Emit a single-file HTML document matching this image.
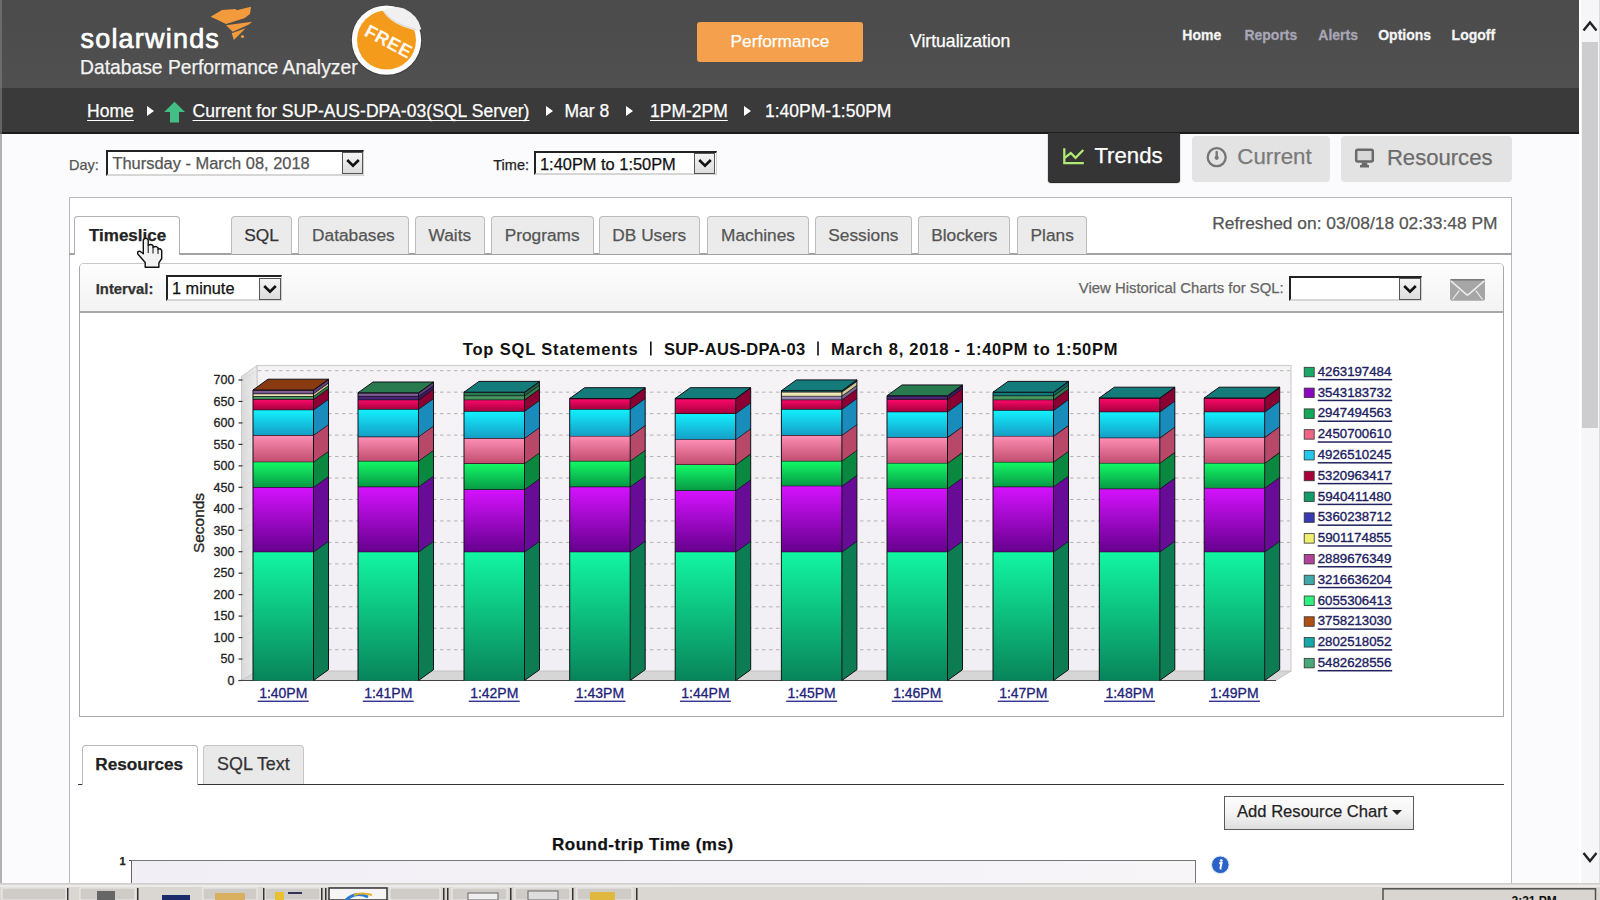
<!DOCTYPE html>
<html><head><meta charset="utf-8"><style>
html,body{margin:0;padding:0;width:1600px;height:900px;overflow:hidden;background:#fbfbfd;font-family:"Liberation Sans",sans-serif;}
.t{position:absolute;white-space:nowrap;line-height:normal;-webkit-text-stroke:0.25px currentColor;}
</style></head><body>
<div style="position:absolute;left:0;top:0;width:1580px;height:88px;background:linear-gradient(#4b4b4b,#505050)"></div><div style="position:absolute;left:0;top:88px;width:1580px;height:45.5px;background:#3a3a3a;border-bottom:2px solid #1c1c1c;box-sizing:border-box"></div><div class="t" style="left:80.5px;top:23.56px;font-size:27px;font-weight:400;color:#fff;letter-spacing:1.2px;-webkit-text-stroke:0.7px #fff">solarwinds</div>
<div class="t" style="left:80px;top:56.53px;font-size:19.3px;font-weight:400;color:#f2f2f2;">Database Performance Analyzer</div>
<svg style="position:absolute;left:0;top:0" width="440" height="88">
<path d="M210.6 16.7 L222 10 L235.6 8.9 L236.7 10.3 L251 6.7 L250 13.9 L244.4 18.3 L226 23.9 L216.7 19.4 Z" fill="#f39a3c"/>
<path d="M226 25.2 L252.2 21.7 L248.9 24.6 L232.8 31.7 Z" fill="#f39a3c"/>
<path d="M231.7 33.3 L245.6 28.3 L233.9 40 Z" fill="#f39a3c"/>
<circle cx="242.5" cy="36.5" r="1.6" fill="#f39a3c"/>
<circle cx="386.5" cy="40.5" r="35.5" fill="#2a2a2a" opacity="0.5"/>
<circle cx="386.5" cy="40.1" r="34.7" fill="#fdfdfd"/>
<circle cx="386.5" cy="40.1" r="29.5" fill="#f59b1c"/>
<path d="M382.5 10.5 Q391 25 417.5 31 L421.2 29 Q418 15 404 8.5 Q393 4.5 382.5 10.5 Z" fill="#f0f0f0"/><path d="M384 11.5 Q392 23.5 416 29.5" fill="none" stroke="#d8d8d8" stroke-width="1"/>
<text x="0" y="0" transform="translate(385.5 47) rotate(28)" text-anchor="middle" font-family="Liberation Sans" font-weight="700" font-size="18.5" fill="#fff8ee" letter-spacing="0.3">FREE</text>
</svg><div style="position:absolute;left:697px;top:21.5px;width:166px;height:40px;background:#f5a04c;border-radius:3px"></div><div class="t" style="left:730.5px;top:31.34px;font-size:17.3px;font-weight:400;color:#fff;">Performance</div>
<div class="t" style="left:910px;top:31.07px;font-size:17.6px;font-weight:400;color:#fff;">Virtualization</div>
<div class="t" style="left:1182.3px;top:26.53px;font-size:14px;font-weight:700;color:#f4f4f4;transform:scaleY(1.04);transform-origin:0 100%">Home</div>
<div class="t" style="left:1244.4px;top:26.53px;font-size:14px;font-weight:700;color:#a9a6b6;transform:scaleY(1.04);transform-origin:0 100%">Reports</div>
<div class="t" style="left:1318.3px;top:26.53px;font-size:14px;font-weight:700;color:#a9a6b6;transform:scaleY(1.04);transform-origin:0 100%">Alerts</div>
<div class="t" style="left:1378.2px;top:26.53px;font-size:14px;font-weight:700;color:#f4f4f4;transform:scaleY(1.04);transform-origin:0 100%">Options</div>
<div class="t" style="left:1451.6px;top:26.53px;font-size:14px;font-weight:700;color:#f4f4f4;transform:scaleY(1.04);transform-origin:0 100%">Logoff</div>
<div class="t" style="left:87.1px;top:101.46px;font-size:17.5px;font-weight:400;color:#fff;text-decoration:underline;text-underline-offset:3px">Home</div>
<div style="position:absolute;left:146.5px;top:106px;width:0;height:0;border-left:7px solid #fff;border-top:5.5px solid transparent;border-bottom:5.5px solid transparent"></div><svg style="position:absolute;left:164px;top:101px" width="22" height="22"><path d="M10.5 0.7 L21 11 L15 11 L15 21.5 L6 21.5 L6 11 L0.2 11 Z" fill="#43bf86"/></svg><div class="t" style="left:192.5px;top:101.46px;font-size:17.5px;font-weight:400;color:#fff;text-decoration:underline;text-underline-offset:3px;letter-spacing:0.065px">Current for SUP-AUS-DPA-03(SQL Server)</div>
<div style="position:absolute;left:546px;top:106px;width:0;height:0;border-left:7px solid #fff;border-top:5.5px solid transparent;border-bottom:5.5px solid transparent"></div><div class="t" style="left:564.5px;top:101.46px;font-size:17.5px;font-weight:400;color:#fff;">Mar 8</div>
<div style="position:absolute;left:626px;top:106px;width:0;height:0;border-left:7px solid #fff;border-top:5.5px solid transparent;border-bottom:5.5px solid transparent"></div><div class="t" style="left:650px;top:101.46px;font-size:17.5px;font-weight:400;color:#fff;text-decoration:underline;text-underline-offset:3px">1PM-2PM</div>
<div style="position:absolute;left:744px;top:106px;width:0;height:0;border-left:7px solid #fff;border-top:5.5px solid transparent;border-bottom:5.5px solid transparent"></div><div class="t" style="left:765px;top:101.46px;font-size:17.5px;font-weight:400;color:#fff;">1:40PM-1:50PM</div>
<div style="position:absolute;left:1579px;top:0;width:21px;height:883px;background:#f6f6f8;border-left:2px solid #fff;box-sizing:border-box"></div><div style="position:absolute;left:1582px;top:42px;width:16px;height:386px;background:#cdcdcf"></div><div style="position:absolute;left:1599px;top:0;width:1px;height:883px;background:#dcdcdc"></div><svg style="position:absolute;left:1580px;top:0" width="20" height="883">
<path d="M3.5 30.5 L10 22.5 L16.5 30.5" fill="none" stroke="#222" stroke-width="2.4"/>
<path d="M3.5 853 L10 861 L16.5 853" fill="none" stroke="#222" stroke-width="2.4"/>
</svg><div class="t" style="left:69px;top:156.88px;font-size:14.5px;font-weight:400;color:#555;">Day:</div>
<div style="position:absolute;left:106.4px;top:150px;width:258.0px;height:25.5px;background:#fff;border-top:2px solid #222;border-left:2px solid #222;border-right:1px solid #cfcfcf;border-bottom:2px solid #d6d6d6;box-sizing:border-box"></div><div style="position:absolute;left:342px;top:152px;width:21px;height:22px;background:linear-gradient(#f4f4f4,#dcdcdc);border:1px solid #555;box-sizing:border-box"></div><svg style="position:absolute;left:344.5px;top:157.0px" width="16" height="12"><path d="M2.2 3 L8 8.6 L13.8 3" fill="none" stroke="#111" stroke-width="2.6"/></svg><div class="t" style="left:112.4px;top:154.11px;font-size:16.45px;font-weight:400;color:#555;">Thursday - March 08, 2018</div>
<div class="t" style="left:493.3px;top:156.58px;font-size:14.5px;font-weight:400;color:#222;">Time:</div>
<div style="position:absolute;left:534px;top:150.6px;width:182.5px;height:24.400000000000006px;background:#fff;border-top:2px solid #222;border-left:2px solid #222;border-right:1px solid #cfcfcf;border-bottom:2px solid #d6d6d6;box-sizing:border-box"></div><div style="position:absolute;left:694px;top:152.5px;width:21px;height:21.0px;background:linear-gradient(#f4f4f4,#dcdcdc);border:1px solid #555;box-sizing:border-box"></div><svg style="position:absolute;left:696.5px;top:157.0px" width="16" height="12"><path d="M2.2 3 L8 8.6 L13.8 3" fill="none" stroke="#111" stroke-width="2.6"/></svg><div class="t" style="left:540px;top:154.66px;font-size:16.4px;font-weight:400;color:#111;">1:40PM to 1:50PM</div>
<div style="position:absolute;left:1048.4px;top:133px;width:132px;height:48.5px;background:#353535;border-radius:0 0 3px 3px;box-shadow:0 1px 1px #111"></div><svg style="position:absolute;left:1060px;top:146px" width="28" height="20">
<path d="M4.3 2.3 L4.3 17.1 L23.8 17.1" fill="none" stroke="#b0ea74" stroke-width="2.3"/>
<path d="M4.6 11.8 L10.8 7 L15.5 11.8 L23.3 4" fill="none" stroke="#b0ea74" stroke-width="2.3"/>
</svg><div class="t" style="left:1094.4px;top:143.21px;font-size:22.2px;font-weight:400;color:#fff;">Trends</div>
<div style="position:absolute;left:1191.6px;top:136.4px;width:138px;height:45.6px;background:#e3e3e3;border-radius:4px"></div><svg style="position:absolute;left:1205px;top:146px" width="24" height="24">
<circle cx="11.7" cy="11.2" r="9" fill="none" stroke="#747474" stroke-width="2.3"/>
<path d="M11.7 6 L11.7 11.5" stroke="#777" stroke-width="2.4" stroke-linecap="round"/>
<circle cx="11.7" cy="11.8" r="2.1" fill="#777"/>
</svg><div class="t" style="left:1237.3px;top:144.42px;font-size:22.3px;font-weight:400;color:#7a7a7a;">Current</div>
<div style="position:absolute;left:1341px;top:136px;width:170.5px;height:46.4px;background:#e3e3e3;border-radius:4px"></div><svg style="position:absolute;left:1354px;top:147px" width="22" height="22">
<rect x="2.2" y="2.8" width="16.6" height="11.8" rx="1.5" fill="#d8d8d8" stroke="#6a6a6a" stroke-width="2.5"/>
<path d="M8 15.5 L13 15.5 L13.5 18 L15 18 L15 20.4 L6 20.4 L6 18 L7.5 18 Z" fill="#6a6a6a"/>
</svg><div class="t" style="left:1386.9px;top:144.90px;font-size:22.1px;font-weight:400;color:#6c6c6c;">Resources</div>
<div style="position:absolute;left:69.4px;top:196.8px;width:1443px;height:720px;background:#fff;border:1px solid #b9b9b9;box-sizing:border-box"></div><div style="position:absolute;left:69.4px;top:253.4px;width:1443px;height:1.6px;background:#a2a2a2"></div><div style="position:absolute;left:74.3px;top:216px;width:105.7px;height:39.19999999999999px;background:#fff;border:1px solid #b0b0b0;border-bottom:none;border-radius:4px 4px 0 0;box-sizing:border-box"></div><div class="t" style="left:89px;top:225.81px;font-size:17px;font-weight:700;color:#222;">Timeslice</div>
<div style="position:absolute;left:231.4px;top:216px;width:60.20000000000002px;height:37.599999999999994px;background:#ebebeb;border:1px solid #bcbcbc;border-bottom:none;border-radius:4px 4px 0 0;box-sizing:border-box"></div><div class="t" style="left:244.18px;top:225.24px;font-size:17.3px;font-weight:400;color:#333;">SQL</div>
<div style="position:absolute;left:298.2px;top:216px;width:110.5px;height:37.599999999999994px;background:#ebebeb;border:1px solid #bcbcbc;border-bottom:none;border-radius:4px 4px 0 0;box-sizing:border-box"></div><div class="t" style="left:312.08px;top:225.24px;font-size:17.3px;font-weight:400;color:#555;">Databases</div>
<div style="position:absolute;left:414.9px;top:216px;width:69.90000000000003px;height:37.599999999999994px;background:#ebebeb;border:1px solid #bcbcbc;border-bottom:none;border-radius:4px 4px 0 0;box-sizing:border-box"></div><div class="t" style="left:428.54px;top:225.24px;font-size:17.3px;font-weight:400;color:#555;">Waits</div>
<div style="position:absolute;left:490.5px;top:216px;width:103.29999999999995px;height:37.599999999999994px;background:#ebebeb;border:1px solid #bcbcbc;border-bottom:none;border-radius:4px 4px 0 0;box-sizing:border-box"></div><div class="t" style="left:504.64px;top:225.24px;font-size:17.3px;font-weight:400;color:#555;">Programs</div>
<div style="position:absolute;left:599px;top:216px;width:100.70000000000005px;height:37.599999999999994px;background:#ebebeb;border:1px solid #bcbcbc;border-bottom:none;border-radius:4px 4px 0 0;box-sizing:border-box"></div><div class="t" style="left:612.33px;top:225.24px;font-size:17.3px;font-weight:400;color:#555;">DB Users</div>
<div style="position:absolute;left:707.4px;top:216px;width:101.30000000000007px;height:37.599999999999994px;background:#ebebeb;border:1px solid #bcbcbc;border-bottom:none;border-radius:4px 4px 0 0;box-sizing:border-box"></div><div class="t" style="left:721.01px;top:225.24px;font-size:17.3px;font-weight:400;color:#555;">Machines</div>
<div style="position:absolute;left:814.9px;top:216px;width:97.10000000000002px;height:37.599999999999994px;background:#ebebeb;border:1px solid #bcbcbc;border-bottom:none;border-radius:4px 4px 0 0;box-sizing:border-box"></div><div class="t" style="left:828.34px;top:225.24px;font-size:17.3px;font-weight:400;color:#555;">Sessions</div>
<div style="position:absolute;left:918.2px;top:216px;width:92.29999999999995px;height:37.599999999999994px;background:#ebebeb;border:1px solid #bcbcbc;border-bottom:none;border-radius:4px 4px 0 0;box-sizing:border-box"></div><div class="t" style="left:931.17px;top:225.24px;font-size:17.3px;font-weight:400;color:#555;">Blockers</div>
<div style="position:absolute;left:1017px;top:216px;width:70.40000000000009px;height:37.599999999999994px;background:#ebebeb;border:1px solid #bcbcbc;border-bottom:none;border-radius:4px 4px 0 0;box-sizing:border-box"></div><div class="t" style="left:1030.55px;top:225.24px;font-size:17.3px;font-weight:400;color:#555;">Plans</div>
<div class="t" style="left:1212.3px;top:213.15px;font-size:17.4px;font-weight:400;color:#555;">Refreshed on: 03/08/18 02:33:48 PM</div>
<div style="position:absolute;left:78.5px;top:263.3px;width:1425px;height:454px;background:#fff;border:1px solid #a8a8a8;border-top-color:#c8c8c8;border-radius:5px 5px 0 0;box-sizing:border-box"></div><div style="position:absolute;left:79.5px;top:264.3px;width:1423px;height:47px;background:linear-gradient(#fdfdfd,#f3f3f3);border-radius:4px 4px 0 0"></div><div style="position:absolute;left:79.5px;top:311px;width:1423px;height:1.5px;background:#a9a9a9"></div><div class="t" style="left:95.75px;top:280.61px;font-size:14.8px;font-weight:700;color:#333;">Interval:</div>
<div style="position:absolute;left:166.4px;top:275.3px;width:115.6px;height:26.0px;background:#fff;border-top:2px solid #222;border-left:2px solid #222;border-right:1px solid #cfcfcf;border-bottom:2px solid #d6d6d6;box-sizing:border-box"></div><div style="position:absolute;left:259px;top:277.75px;width:21.69999999999999px;height:21.94999999999999px;background:linear-gradient(#f4f4f4,#dcdcdc);border:1px solid #555;box-sizing:border-box"></div><svg style="position:absolute;left:261.85px;top:282.725px" width="16" height="12"><path d="M2.2 3 L8 8.6 L13.8 3" fill="none" stroke="#111" stroke-width="2.6"/></svg><div class="t" style="left:172px;top:279.25px;font-size:16.3px;font-weight:400;color:#111;">1 minute</div>
<div class="t" style="left:1078.75px;top:280.22px;font-size:14.9px;font-weight:400;color:#666;">View Historical Charts for SQL:</div>
<div style="position:absolute;left:1288.8px;top:276px;width:133.20000000000005px;height:25px;background:#fff;border-top:2px solid #222;border-left:2px solid #222;border-right:1px solid #cfcfcf;border-bottom:2px solid #d6d6d6;box-sizing:border-box"></div><div style="position:absolute;left:1399.3px;top:277.5px;width:21.299999999999955px;height:22.0px;background:linear-gradient(#f4f4f4,#dcdcdc);border:1px solid #555;box-sizing:border-box"></div><svg style="position:absolute;left:1401.9499999999998px;top:282.5px" width="16" height="12"><path d="M2.2 3 L8 8.6 L13.8 3" fill="none" stroke="#111" stroke-width="2.6"/></svg><svg style="position:absolute;left:1449px;top:278px" width="38" height="25">
<rect x="1" y="1" width="35" height="21.8" rx="2" fill="#a6a6a6"/>
<rect x="1.5" y="1" width="34" height="1.6" fill="#7a7a7a"/>
<path d="M1.8 2.8 L17 16.2 Q18.5 17.6 20 16.2 L35.2 2.8" fill="none" stroke="#ececec" stroke-width="1.6"/>
<path d="M3.5 21.5 L10.2 12.6 M33.5 21.5 L26.8 12.6" fill="none" stroke="#ececec" stroke-width="1.2"/>
</svg><svg style="position:absolute;left:0;top:0" width="1600" height="900" shape-rendering="geometricPrecision"><defs>
<linearGradient id="wall" x1="0" y1="0" x2="0" y2="1"><stop offset="0" stop-color="#f5f3f6"/><stop offset="1" stop-color="#f1eff3"/></linearGradient>
<linearGradient id="side" x1="0" y1="0" x2="1" y2="0"><stop offset="0" stop-color="#d9d9d9"/><stop offset="1" stop-color="#ececec"/></linearGradient>
</defs><rect x="257" y="365.5" width="1034" height="305.7" fill="url(#wall)" stroke="#cfcfcf" stroke-width="1.2"/><path d="M241.5 376.5 L257 365.5 L257 671.2 L241.5 680.5 Z" fill="url(#side)" stroke="#c9c9c9" stroke-width="1"/><path d="M241.5 680.5 L257 671.2 L1291 671.2 L1276 680.5 Z" fill="#d6d6d6" stroke="#c4c4c4" stroke-width="0.8"/><line x1="258" y1="649.74" x2="1290" y2="649.74" stroke="#b2b2b2" stroke-width="1" stroke-dasharray="3.5 3.5"/><line x1="242" y1="659.04" x2="257" y2="649.74" stroke="#cfcfcf" stroke-width="0.8" stroke-dasharray="2 2"/><line x1="258" y1="628.27" x2="1290" y2="628.27" stroke="#b2b2b2" stroke-width="1" stroke-dasharray="3.5 3.5"/><line x1="242" y1="637.57" x2="257" y2="628.27" stroke="#cfcfcf" stroke-width="0.8" stroke-dasharray="2 2"/><line x1="258" y1="606.81" x2="1290" y2="606.81" stroke="#b2b2b2" stroke-width="1" stroke-dasharray="3.5 3.5"/><line x1="242" y1="616.11" x2="257" y2="606.81" stroke="#cfcfcf" stroke-width="0.8" stroke-dasharray="2 2"/><line x1="258" y1="585.34" x2="1290" y2="585.34" stroke="#b2b2b2" stroke-width="1" stroke-dasharray="3.5 3.5"/><line x1="242" y1="594.64" x2="257" y2="585.34" stroke="#cfcfcf" stroke-width="0.8" stroke-dasharray="2 2"/><line x1="258" y1="563.88" x2="1290" y2="563.88" stroke="#b2b2b2" stroke-width="1" stroke-dasharray="3.5 3.5"/><line x1="242" y1="573.18" x2="257" y2="563.88" stroke="#cfcfcf" stroke-width="0.8" stroke-dasharray="2 2"/><line x1="258" y1="542.41" x2="1290" y2="542.41" stroke="#b2b2b2" stroke-width="1" stroke-dasharray="3.5 3.5"/><line x1="242" y1="551.71" x2="257" y2="542.41" stroke="#cfcfcf" stroke-width="0.8" stroke-dasharray="2 2"/><line x1="258" y1="520.95" x2="1290" y2="520.95" stroke="#b2b2b2" stroke-width="1" stroke-dasharray="3.5 3.5"/><line x1="242" y1="530.25" x2="257" y2="520.95" stroke="#cfcfcf" stroke-width="0.8" stroke-dasharray="2 2"/><line x1="258" y1="499.49" x2="1290" y2="499.49" stroke="#b2b2b2" stroke-width="1" stroke-dasharray="3.5 3.5"/><line x1="242" y1="508.79" x2="257" y2="499.49" stroke="#cfcfcf" stroke-width="0.8" stroke-dasharray="2 2"/><line x1="258" y1="478.02" x2="1290" y2="478.02" stroke="#b2b2b2" stroke-width="1" stroke-dasharray="3.5 3.5"/><line x1="242" y1="487.32" x2="257" y2="478.02" stroke="#cfcfcf" stroke-width="0.8" stroke-dasharray="2 2"/><line x1="258" y1="456.56" x2="1290" y2="456.56" stroke="#b2b2b2" stroke-width="1" stroke-dasharray="3.5 3.5"/><line x1="242" y1="465.86" x2="257" y2="456.56" stroke="#cfcfcf" stroke-width="0.8" stroke-dasharray="2 2"/><line x1="258" y1="435.09" x2="1290" y2="435.09" stroke="#b2b2b2" stroke-width="1" stroke-dasharray="3.5 3.5"/><line x1="242" y1="444.39" x2="257" y2="435.09" stroke="#cfcfcf" stroke-width="0.8" stroke-dasharray="2 2"/><line x1="258" y1="413.63" x2="1290" y2="413.63" stroke="#b2b2b2" stroke-width="1" stroke-dasharray="3.5 3.5"/><line x1="242" y1="422.93" x2="257" y2="413.63" stroke="#cfcfcf" stroke-width="0.8" stroke-dasharray="2 2"/><line x1="258" y1="392.16" x2="1290" y2="392.16" stroke="#b2b2b2" stroke-width="1" stroke-dasharray="3.5 3.5"/><line x1="242" y1="401.46" x2="257" y2="392.16" stroke="#cfcfcf" stroke-width="0.8" stroke-dasharray="2 2"/><line x1="258" y1="370.70" x2="1290" y2="370.70" stroke="#b2b2b2" stroke-width="1" stroke-dasharray="3.5 3.5"/><line x1="242" y1="380.00" x2="257" y2="370.70" stroke="#cfcfcf" stroke-width="0.8" stroke-dasharray="2 2"/><line x1="238.5" y1="680.50" x2="242.5" y2="680.50" stroke="#333" stroke-width="1.2"/><text x="234.4" y="684.80" text-anchor="end" font-family="Liberation Sans" font-size="12.5" fill="#222" stroke="#222" stroke-width="0.3">0</text><line x1="238.5" y1="659.04" x2="242.5" y2="659.04" stroke="#333" stroke-width="1.2"/><text x="234.4" y="663.34" text-anchor="end" font-family="Liberation Sans" font-size="12.5" fill="#222" stroke="#222" stroke-width="0.3">50</text><line x1="238.5" y1="637.57" x2="242.5" y2="637.57" stroke="#333" stroke-width="1.2"/><text x="234.4" y="641.87" text-anchor="end" font-family="Liberation Sans" font-size="12.5" fill="#222" stroke="#222" stroke-width="0.3">100</text><line x1="238.5" y1="616.11" x2="242.5" y2="616.11" stroke="#333" stroke-width="1.2"/><text x="234.4" y="620.41" text-anchor="end" font-family="Liberation Sans" font-size="12.5" fill="#222" stroke="#222" stroke-width="0.3">150</text><line x1="238.5" y1="594.64" x2="242.5" y2="594.64" stroke="#333" stroke-width="1.2"/><text x="234.4" y="598.94" text-anchor="end" font-family="Liberation Sans" font-size="12.5" fill="#222" stroke="#222" stroke-width="0.3">200</text><line x1="238.5" y1="573.18" x2="242.5" y2="573.18" stroke="#333" stroke-width="1.2"/><text x="234.4" y="577.48" text-anchor="end" font-family="Liberation Sans" font-size="12.5" fill="#222" stroke="#222" stroke-width="0.3">250</text><line x1="238.5" y1="551.71" x2="242.5" y2="551.71" stroke="#333" stroke-width="1.2"/><text x="234.4" y="556.01" text-anchor="end" font-family="Liberation Sans" font-size="12.5" fill="#222" stroke="#222" stroke-width="0.3">300</text><line x1="238.5" y1="530.25" x2="242.5" y2="530.25" stroke="#333" stroke-width="1.2"/><text x="234.4" y="534.55" text-anchor="end" font-family="Liberation Sans" font-size="12.5" fill="#222" stroke="#222" stroke-width="0.3">350</text><line x1="238.5" y1="508.79" x2="242.5" y2="508.79" stroke="#333" stroke-width="1.2"/><text x="234.4" y="513.09" text-anchor="end" font-family="Liberation Sans" font-size="12.5" fill="#222" stroke="#222" stroke-width="0.3">400</text><line x1="238.5" y1="487.32" x2="242.5" y2="487.32" stroke="#333" stroke-width="1.2"/><text x="234.4" y="491.62" text-anchor="end" font-family="Liberation Sans" font-size="12.5" fill="#222" stroke="#222" stroke-width="0.3">450</text><line x1="238.5" y1="465.86" x2="242.5" y2="465.86" stroke="#333" stroke-width="1.2"/><text x="234.4" y="470.16" text-anchor="end" font-family="Liberation Sans" font-size="12.5" fill="#222" stroke="#222" stroke-width="0.3">500</text><line x1="238.5" y1="444.39" x2="242.5" y2="444.39" stroke="#333" stroke-width="1.2"/><text x="234.4" y="448.69" text-anchor="end" font-family="Liberation Sans" font-size="12.5" fill="#222" stroke="#222" stroke-width="0.3">550</text><line x1="238.5" y1="422.93" x2="242.5" y2="422.93" stroke="#333" stroke-width="1.2"/><text x="234.4" y="427.23" text-anchor="end" font-family="Liberation Sans" font-size="12.5" fill="#222" stroke="#222" stroke-width="0.3">600</text><line x1="238.5" y1="401.46" x2="242.5" y2="401.46" stroke="#333" stroke-width="1.2"/><text x="234.4" y="405.76" text-anchor="end" font-family="Liberation Sans" font-size="12.5" fill="#222" stroke="#222" stroke-width="0.3">650</text><line x1="238.5" y1="380.00" x2="242.5" y2="380.00" stroke="#333" stroke-width="1.2"/><text x="234.4" y="384.30" text-anchor="end" font-family="Liberation Sans" font-size="12.5" fill="#222" stroke="#222" stroke-width="0.3">700</text><line x1="238.5" y1="680.5" x2="1276" y2="680.5" stroke="#444" stroke-width="1"/><text transform="translate(203.8 523) rotate(-90)" text-anchor="middle" font-family="Liberation Sans" font-size="15.5" fill="#222" stroke="#222" stroke-width="0.35" textLength="60" lengthAdjust="spacingAndGlyphs">Seconds</text><text x="462.7" y="354.5" font-family="Liberation Sans" font-size="16.5" font-weight="700" fill="#111" textLength="175" lengthAdjust="spacing">Top SQL Statements</text><rect x="650" y="341.5" width="1.6" height="14" fill="#111"/><text x="664" y="354.5" font-family="Liberation Sans" font-size="16.5" font-weight="700" fill="#111" textLength="141.3" lengthAdjust="spacing">SUP-AUS-DPA-03</text><rect x="817.2" y="341.5" width="1.6" height="14" fill="#111"/><text x="831.1" y="354.5" font-family="Liberation Sans" font-size="16.5" font-weight="700" fill="#111" textLength="286.4" lengthAdjust="spacing">March 8, 2018 - 1:40PM to 1:50PM</text><linearGradient id="g1" x1="0" y1="0" x2="0" y2="1"><stop offset="0" stop-color="#12f7a2"/><stop offset="1" stop-color="#08845a"/></linearGradient><rect x="253.0" y="551.7" width="60.5" height="128.80" fill="url(#g1)"/><path d="M313.5 551.7 L328.5 540.9000000000001 L328.5 669.7 L313.5 680.5 Z" fill="#0e7c52"/><line x1="253.0" y1="551.7" x2="313.5" y2="551.7" stroke="#101018" stroke-width="1.3"/><line x1="313.5" y1="551.7" x2="328.5" y2="540.9000000000001" stroke="#101018" stroke-width="1.3"/><linearGradient id="g2" x1="0" y1="0" x2="0" y2="1"><stop offset="0" stop-color="#d612ff"/><stop offset="1" stop-color="#66008e"/></linearGradient><rect x="253.0" y="487" width="60.5" height="64.70" fill="url(#g2)"/><path d="M313.5 487 L328.5 476.2 L328.5 540.9000000000001 L313.5 551.7 Z" fill="#680c98"/><line x1="253.0" y1="487" x2="313.5" y2="487" stroke="#101018" stroke-width="1.3"/><line x1="313.5" y1="487" x2="328.5" y2="476.2" stroke="#101018" stroke-width="1.3"/><linearGradient id="g3" x1="0" y1="0" x2="0" y2="1"><stop offset="0" stop-color="#12fb66"/><stop offset="1" stop-color="#089a45"/></linearGradient><rect x="253.0" y="461.7" width="60.5" height="25.30" fill="url(#g3)"/><path d="M313.5 461.7 L328.5 450.9 L328.5 476.2 L313.5 487 Z" fill="#0a8840"/><line x1="253.0" y1="461.7" x2="313.5" y2="461.7" stroke="#101018" stroke-width="1.3"/><line x1="313.5" y1="461.7" x2="328.5" y2="450.9" stroke="#101018" stroke-width="1.3"/><linearGradient id="g4" x1="0" y1="0" x2="0" y2="1"><stop offset="0" stop-color="#ff8fb6"/><stop offset="1" stop-color="#c24e70"/></linearGradient><rect x="253.0" y="435" width="60.5" height="26.70" fill="url(#g4)"/><path d="M313.5 435 L328.5 424.2 L328.5 450.9 L313.5 461.7 Z" fill="#b84868"/><line x1="253.0" y1="435" x2="313.5" y2="435" stroke="#101018" stroke-width="1.3"/><line x1="313.5" y1="435" x2="328.5" y2="424.2" stroke="#101018" stroke-width="1.3"/><linearGradient id="g5" x1="0" y1="0" x2="0" y2="1"><stop offset="0" stop-color="#12f2ff"/><stop offset="1" stop-color="#159ec6"/></linearGradient><rect x="253.0" y="409.7" width="60.5" height="25.30" fill="url(#g5)"/><path d="M313.5 409.7 L328.5 398.9 L328.5 424.2 L313.5 435 Z" fill="#1a8cbc"/><line x1="253.0" y1="409.7" x2="313.5" y2="409.7" stroke="#101018" stroke-width="1.3"/><line x1="313.5" y1="409.7" x2="328.5" y2="398.9" stroke="#101018" stroke-width="1.3"/><linearGradient id="g6" x1="0" y1="0" x2="0" y2="1"><stop offset="0" stop-color="#ff0a6c"/><stop offset="1" stop-color="#a8003e"/></linearGradient><rect x="253.0" y="399" width="60.5" height="10.70" fill="url(#g6)"/><path d="M313.5 399 L328.5 388.2 L328.5 398.9 L313.5 409.7 Z" fill="#8a0032"/><line x1="253.0" y1="399" x2="313.5" y2="399" stroke="#101018" stroke-width="1.3"/><line x1="313.5" y1="399" x2="328.5" y2="388.2" stroke="#101018" stroke-width="1.3"/><linearGradient id="g7" x1="0" y1="0" x2="0" y2="1"><stop offset="0" stop-color="#58a870"/><stop offset="1" stop-color="#3a8850"/></linearGradient><rect x="253.0" y="396" width="60.5" height="3.00" fill="url(#g7)"/><path d="M313.5 396 L328.5 385.2 L328.5 388.2 L313.5 399 Z" fill="#307848"/><line x1="253.0" y1="396" x2="313.5" y2="396" stroke="#101018" stroke-width="1.3"/><line x1="313.5" y1="396" x2="328.5" y2="385.2" stroke="#101018" stroke-width="1.3"/><linearGradient id="g8" x1="0" y1="0" x2="0" y2="1"><stop offset="0" stop-color="#f4f0c0"/><stop offset="1" stop-color="#e6e0a8"/></linearGradient><rect x="253.0" y="393.5" width="60.5" height="2.50" fill="url(#g8)"/><path d="M313.5 393.5 L328.5 382.7 L328.5 385.2 L313.5 396 Z" fill="#d0c890"/><line x1="253.0" y1="393.5" x2="313.5" y2="393.5" stroke="#101018" stroke-width="1.3"/><line x1="313.5" y1="393.5" x2="328.5" y2="382.7" stroke="#101018" stroke-width="1.3"/><linearGradient id="g9" x1="0" y1="0" x2="0" y2="1"><stop offset="0" stop-color="#906ca0"/><stop offset="1" stop-color="#74508a"/></linearGradient><rect x="253.0" y="390" width="60.5" height="3.50" fill="url(#g9)"/><path d="M313.5 390 L328.5 379.2 L328.5 382.7 L313.5 393.5 Z" fill="#604078"/><line x1="253.0" y1="390" x2="313.5" y2="390" stroke="#101018" stroke-width="1.3"/><line x1="313.5" y1="390" x2="328.5" y2="379.2" stroke="#101018" stroke-width="1.3"/><path d="M253.0 390 L268.0 379.2 L328.5 379.2 L313.5 390 Z" fill="#8a3a10" stroke="#101018" stroke-width="1"/><path d="M253.0 680.5 L253.0 390 M313.5 680.5 L313.5 390 M328.5 379.2 L328.5 669.7 L313.5 680.5" fill="none" stroke="#101018" stroke-width="1"/><text x="283.25" y="698" text-anchor="middle" font-family="Liberation Sans" font-size="14" fill="#22227a" stroke="#22227a" stroke-width="0.3">1:40PM</text><rect x="257.75" y="700.6" width="51" height="1.3" fill="#22228a"/><linearGradient id="g10" x1="0" y1="0" x2="0" y2="1"><stop offset="0" stop-color="#12f7a2"/><stop offset="1" stop-color="#08845a"/></linearGradient><rect x="358.0" y="551.7" width="60.5" height="128.80" fill="url(#g10)"/><path d="M418.5 551.7 L433.5 540.9000000000001 L433.5 669.7 L418.5 680.5 Z" fill="#0e7c52"/><line x1="358.0" y1="551.7" x2="418.5" y2="551.7" stroke="#101018" stroke-width="1.3"/><line x1="418.5" y1="551.7" x2="433.5" y2="540.9000000000001" stroke="#101018" stroke-width="1.3"/><linearGradient id="g11" x1="0" y1="0" x2="0" y2="1"><stop offset="0" stop-color="#d612ff"/><stop offset="1" stop-color="#66008e"/></linearGradient><rect x="358.0" y="486.5" width="60.5" height="65.20" fill="url(#g11)"/><path d="M418.5 486.5 L433.5 475.7 L433.5 540.9000000000001 L418.5 551.7 Z" fill="#680c98"/><line x1="358.0" y1="486.5" x2="418.5" y2="486.5" stroke="#101018" stroke-width="1.3"/><line x1="418.5" y1="486.5" x2="433.5" y2="475.7" stroke="#101018" stroke-width="1.3"/><linearGradient id="g12" x1="0" y1="0" x2="0" y2="1"><stop offset="0" stop-color="#12fb66"/><stop offset="1" stop-color="#089a45"/></linearGradient><rect x="358.0" y="460.8" width="60.5" height="25.70" fill="url(#g12)"/><path d="M418.5 460.8 L433.5 450.0 L433.5 475.7 L418.5 486.5 Z" fill="#0a8840"/><line x1="358.0" y1="460.8" x2="418.5" y2="460.8" stroke="#101018" stroke-width="1.3"/><line x1="418.5" y1="460.8" x2="433.5" y2="450.0" stroke="#101018" stroke-width="1.3"/><linearGradient id="g13" x1="0" y1="0" x2="0" y2="1"><stop offset="0" stop-color="#ff8fb6"/><stop offset="1" stop-color="#c24e70"/></linearGradient><rect x="358.0" y="436.5" width="60.5" height="24.30" fill="url(#g13)"/><path d="M418.5 436.5 L433.5 425.7 L433.5 450.0 L418.5 460.8 Z" fill="#b84868"/><line x1="358.0" y1="436.5" x2="418.5" y2="436.5" stroke="#101018" stroke-width="1.3"/><line x1="418.5" y1="436.5" x2="433.5" y2="425.7" stroke="#101018" stroke-width="1.3"/><linearGradient id="g14" x1="0" y1="0" x2="0" y2="1"><stop offset="0" stop-color="#12f2ff"/><stop offset="1" stop-color="#159ec6"/></linearGradient><rect x="358.0" y="409" width="60.5" height="27.50" fill="url(#g14)"/><path d="M418.5 409 L433.5 398.2 L433.5 425.7 L418.5 436.5 Z" fill="#1a8cbc"/><line x1="358.0" y1="409" x2="418.5" y2="409" stroke="#101018" stroke-width="1.3"/><line x1="418.5" y1="409" x2="433.5" y2="398.2" stroke="#101018" stroke-width="1.3"/><linearGradient id="g15" x1="0" y1="0" x2="0" y2="1"><stop offset="0" stop-color="#ff0a6c"/><stop offset="1" stop-color="#a8003e"/></linearGradient><rect x="358.0" y="399.6" width="60.5" height="9.40" fill="url(#g15)"/><path d="M418.5 399.6 L433.5 388.8 L433.5 398.2 L418.5 409 Z" fill="#8a0032"/><line x1="358.0" y1="399.6" x2="418.5" y2="399.6" stroke="#101018" stroke-width="1.3"/><line x1="418.5" y1="399.6" x2="433.5" y2="388.8" stroke="#101018" stroke-width="1.3"/><linearGradient id="g16" x1="0" y1="0" x2="0" y2="1"><stop offset="0" stop-color="#5a2a8a"/><stop offset="1" stop-color="#40206a"/></linearGradient><rect x="358.0" y="396" width="60.5" height="3.60" fill="url(#g16)"/><path d="M418.5 396 L433.5 385.2 L433.5 388.8 L418.5 399.6 Z" fill="#381a60"/><line x1="358.0" y1="396" x2="418.5" y2="396" stroke="#101018" stroke-width="1.3"/><line x1="418.5" y1="396" x2="433.5" y2="385.2" stroke="#101018" stroke-width="1.3"/><linearGradient id="g17" x1="0" y1="0" x2="0" y2="1"><stop offset="0" stop-color="#906ca0"/><stop offset="1" stop-color="#74508a"/></linearGradient><rect x="358.0" y="392.8" width="60.5" height="3.20" fill="url(#g17)"/><path d="M418.5 392.8 L433.5 382.0 L433.5 385.2 L418.5 396 Z" fill="#604078"/><line x1="358.0" y1="392.8" x2="418.5" y2="392.8" stroke="#101018" stroke-width="1.3"/><line x1="418.5" y1="392.8" x2="433.5" y2="382.0" stroke="#101018" stroke-width="1.3"/><path d="M358.0 392.8 L373.0 382.0 L433.5 382.0 L418.5 392.8 Z" fill="#2a7a50" stroke="#101018" stroke-width="1"/><path d="M358.0 680.5 L358.0 392.8 M418.5 680.5 L418.5 392.8 M433.5 382.0 L433.5 669.7 L418.5 680.5" fill="none" stroke="#101018" stroke-width="1"/><text x="388.25" y="698" text-anchor="middle" font-family="Liberation Sans" font-size="14" fill="#22227a" stroke="#22227a" stroke-width="0.3">1:41PM</text><rect x="362.75" y="700.6" width="51" height="1.3" fill="#22228a"/><linearGradient id="g18" x1="0" y1="0" x2="0" y2="1"><stop offset="0" stop-color="#12f7a2"/><stop offset="1" stop-color="#08845a"/></linearGradient><rect x="464.0" y="551.7" width="60.5" height="128.80" fill="url(#g18)"/><path d="M524.5 551.7 L539.5 540.9000000000001 L539.5 669.7 L524.5 680.5 Z" fill="#0e7c52"/><line x1="464.0" y1="551.7" x2="524.5" y2="551.7" stroke="#101018" stroke-width="1.3"/><line x1="524.5" y1="551.7" x2="539.5" y2="540.9000000000001" stroke="#101018" stroke-width="1.3"/><linearGradient id="g19" x1="0" y1="0" x2="0" y2="1"><stop offset="0" stop-color="#d612ff"/><stop offset="1" stop-color="#66008e"/></linearGradient><rect x="464.0" y="489.3" width="60.5" height="62.40" fill="url(#g19)"/><path d="M524.5 489.3 L539.5 478.5 L539.5 540.9000000000001 L524.5 551.7 Z" fill="#680c98"/><line x1="464.0" y1="489.3" x2="524.5" y2="489.3" stroke="#101018" stroke-width="1.3"/><line x1="524.5" y1="489.3" x2="539.5" y2="478.5" stroke="#101018" stroke-width="1.3"/><linearGradient id="g20" x1="0" y1="0" x2="0" y2="1"><stop offset="0" stop-color="#12fb66"/><stop offset="1" stop-color="#089a45"/></linearGradient><rect x="464.0" y="463.3" width="60.5" height="26.00" fill="url(#g20)"/><path d="M524.5 463.3 L539.5 452.5 L539.5 478.5 L524.5 489.3 Z" fill="#0a8840"/><line x1="464.0" y1="463.3" x2="524.5" y2="463.3" stroke="#101018" stroke-width="1.3"/><line x1="524.5" y1="463.3" x2="539.5" y2="452.5" stroke="#101018" stroke-width="1.3"/><linearGradient id="g21" x1="0" y1="0" x2="0" y2="1"><stop offset="0" stop-color="#ff8fb6"/><stop offset="1" stop-color="#c24e70"/></linearGradient><rect x="464.0" y="438" width="60.5" height="25.30" fill="url(#g21)"/><path d="M524.5 438 L539.5 427.2 L539.5 452.5 L524.5 463.3 Z" fill="#b84868"/><line x1="464.0" y1="438" x2="524.5" y2="438" stroke="#101018" stroke-width="1.3"/><line x1="524.5" y1="438" x2="539.5" y2="427.2" stroke="#101018" stroke-width="1.3"/><linearGradient id="g22" x1="0" y1="0" x2="0" y2="1"><stop offset="0" stop-color="#12f2ff"/><stop offset="1" stop-color="#159ec6"/></linearGradient><rect x="464.0" y="411" width="60.5" height="27.00" fill="url(#g22)"/><path d="M524.5 411 L539.5 400.2 L539.5 427.2 L524.5 438 Z" fill="#1a8cbc"/><line x1="464.0" y1="411" x2="524.5" y2="411" stroke="#101018" stroke-width="1.3"/><line x1="524.5" y1="411" x2="539.5" y2="400.2" stroke="#101018" stroke-width="1.3"/><linearGradient id="g23" x1="0" y1="0" x2="0" y2="1"><stop offset="0" stop-color="#ff0a6c"/><stop offset="1" stop-color="#a8003e"/></linearGradient><rect x="464.0" y="399.6" width="60.5" height="11.40" fill="url(#g23)"/><path d="M524.5 399.6 L539.5 388.8 L539.5 400.2 L524.5 411 Z" fill="#8a0032"/><line x1="464.0" y1="399.6" x2="524.5" y2="399.6" stroke="#101018" stroke-width="1.3"/><line x1="524.5" y1="399.6" x2="539.5" y2="388.8" stroke="#101018" stroke-width="1.3"/><linearGradient id="g24" x1="0" y1="0" x2="0" y2="1"><stop offset="0" stop-color="#58a870"/><stop offset="1" stop-color="#3a8850"/></linearGradient><rect x="464.0" y="395.5" width="60.5" height="4.10" fill="url(#g24)"/><path d="M524.5 395.5 L539.5 384.7 L539.5 388.8 L524.5 399.6 Z" fill="#307848"/><line x1="464.0" y1="395.5" x2="524.5" y2="395.5" stroke="#101018" stroke-width="1.3"/><line x1="524.5" y1="395.5" x2="539.5" y2="384.7" stroke="#101018" stroke-width="1.3"/><linearGradient id="g25" x1="0" y1="0" x2="0" y2="1"><stop offset="0" stop-color="#2e8a5c"/><stop offset="1" stop-color="#237048"/></linearGradient><rect x="464.0" y="392.2" width="60.5" height="3.30" fill="url(#g25)"/><path d="M524.5 392.2 L539.5 381.4 L539.5 384.7 L524.5 395.5 Z" fill="#1e6440"/><line x1="464.0" y1="392.2" x2="524.5" y2="392.2" stroke="#101018" stroke-width="1.3"/><line x1="524.5" y1="392.2" x2="539.5" y2="381.4" stroke="#101018" stroke-width="1.3"/><path d="M464.0 392.2 L479.0 381.4 L539.5 381.4 L524.5 392.2 Z" fill="#137c7a" stroke="#101018" stroke-width="1"/><path d="M464.0 680.5 L464.0 392.2 M524.5 680.5 L524.5 392.2 M539.5 381.4 L539.5 669.7 L524.5 680.5" fill="none" stroke="#101018" stroke-width="1"/><text x="494.25" y="698" text-anchor="middle" font-family="Liberation Sans" font-size="14" fill="#22227a" stroke="#22227a" stroke-width="0.3">1:42PM</text><rect x="468.75" y="700.6" width="51" height="1.3" fill="#22228a"/><linearGradient id="g26" x1="0" y1="0" x2="0" y2="1"><stop offset="0" stop-color="#12f7a2"/><stop offset="1" stop-color="#08845a"/></linearGradient><rect x="569.7" y="551.7" width="60.5" height="128.80" fill="url(#g26)"/><path d="M630.2 551.7 L645.2 540.9000000000001 L645.2 669.7 L630.2 680.5 Z" fill="#0e7c52"/><line x1="569.7" y1="551.7" x2="630.2" y2="551.7" stroke="#101018" stroke-width="1.3"/><line x1="630.2" y1="551.7" x2="645.2" y2="540.9000000000001" stroke="#101018" stroke-width="1.3"/><linearGradient id="g27" x1="0" y1="0" x2="0" y2="1"><stop offset="0" stop-color="#d612ff"/><stop offset="1" stop-color="#66008e"/></linearGradient><rect x="569.7" y="486.5" width="60.5" height="65.20" fill="url(#g27)"/><path d="M630.2 486.5 L645.2 475.7 L645.2 540.9000000000001 L630.2 551.7 Z" fill="#680c98"/><line x1="569.7" y1="486.5" x2="630.2" y2="486.5" stroke="#101018" stroke-width="1.3"/><line x1="630.2" y1="486.5" x2="645.2" y2="475.7" stroke="#101018" stroke-width="1.3"/><linearGradient id="g28" x1="0" y1="0" x2="0" y2="1"><stop offset="0" stop-color="#12fb66"/><stop offset="1" stop-color="#089a45"/></linearGradient><rect x="569.7" y="460.8" width="60.5" height="25.70" fill="url(#g28)"/><path d="M630.2 460.8 L645.2 450.0 L645.2 475.7 L630.2 486.5 Z" fill="#0a8840"/><line x1="569.7" y1="460.8" x2="630.2" y2="460.8" stroke="#101018" stroke-width="1.3"/><line x1="630.2" y1="460.8" x2="645.2" y2="450.0" stroke="#101018" stroke-width="1.3"/><linearGradient id="g29" x1="0" y1="0" x2="0" y2="1"><stop offset="0" stop-color="#ff8fb6"/><stop offset="1" stop-color="#c24e70"/></linearGradient><rect x="569.7" y="435.9" width="60.5" height="24.90" fill="url(#g29)"/><path d="M630.2 435.9 L645.2 425.09999999999997 L645.2 450.0 L630.2 460.8 Z" fill="#b84868"/><line x1="569.7" y1="435.9" x2="630.2" y2="435.9" stroke="#101018" stroke-width="1.3"/><line x1="630.2" y1="435.9" x2="645.2" y2="425.09999999999997" stroke="#101018" stroke-width="1.3"/><linearGradient id="g30" x1="0" y1="0" x2="0" y2="1"><stop offset="0" stop-color="#12f2ff"/><stop offset="1" stop-color="#159ec6"/></linearGradient><rect x="569.7" y="409" width="60.5" height="26.90" fill="url(#g30)"/><path d="M630.2 409 L645.2 398.2 L645.2 425.09999999999997 L630.2 435.9 Z" fill="#1a8cbc"/><line x1="569.7" y1="409" x2="630.2" y2="409" stroke="#101018" stroke-width="1.3"/><line x1="630.2" y1="409" x2="645.2" y2="398.2" stroke="#101018" stroke-width="1.3"/><linearGradient id="g31" x1="0" y1="0" x2="0" y2="1"><stop offset="0" stop-color="#ff0a6c"/><stop offset="1" stop-color="#a8003e"/></linearGradient><rect x="569.7" y="398.5" width="60.5" height="10.50" fill="url(#g31)"/><path d="M630.2 398.5 L645.2 387.7 L645.2 398.2 L630.2 409 Z" fill="#8a0032"/><line x1="569.7" y1="398.5" x2="630.2" y2="398.5" stroke="#101018" stroke-width="1.3"/><line x1="630.2" y1="398.5" x2="645.2" y2="387.7" stroke="#101018" stroke-width="1.3"/><path d="M569.7 398.5 L584.7 387.7 L645.2 387.7 L630.2 398.5 Z" fill="#137c7a" stroke="#101018" stroke-width="1"/><path d="M569.7 680.5 L569.7 398.5 M630.2 680.5 L630.2 398.5 M645.2 387.7 L645.2 669.7 L630.2 680.5" fill="none" stroke="#101018" stroke-width="1"/><text x="599.95" y="698" text-anchor="middle" font-family="Liberation Sans" font-size="14" fill="#22227a" stroke="#22227a" stroke-width="0.3">1:43PM</text><rect x="574.45" y="700.6" width="51" height="1.3" fill="#22228a"/><linearGradient id="g32" x1="0" y1="0" x2="0" y2="1"><stop offset="0" stop-color="#12f7a2"/><stop offset="1" stop-color="#08845a"/></linearGradient><rect x="675.2" y="551.7" width="60.5" height="128.80" fill="url(#g32)"/><path d="M735.7 551.7 L750.7 540.9000000000001 L750.7 669.7 L735.7 680.5 Z" fill="#0e7c52"/><line x1="675.2" y1="551.7" x2="735.7" y2="551.7" stroke="#101018" stroke-width="1.3"/><line x1="735.7" y1="551.7" x2="750.7" y2="540.9000000000001" stroke="#101018" stroke-width="1.3"/><linearGradient id="g33" x1="0" y1="0" x2="0" y2="1"><stop offset="0" stop-color="#d612ff"/><stop offset="1" stop-color="#66008e"/></linearGradient><rect x="675.2" y="490.3" width="60.5" height="61.40" fill="url(#g33)"/><path d="M735.7 490.3 L750.7 479.5 L750.7 540.9000000000001 L735.7 551.7 Z" fill="#680c98"/><line x1="675.2" y1="490.3" x2="735.7" y2="490.3" stroke="#101018" stroke-width="1.3"/><line x1="735.7" y1="490.3" x2="750.7" y2="479.5" stroke="#101018" stroke-width="1.3"/><linearGradient id="g34" x1="0" y1="0" x2="0" y2="1"><stop offset="0" stop-color="#12fb66"/><stop offset="1" stop-color="#089a45"/></linearGradient><rect x="675.2" y="464.4" width="60.5" height="25.90" fill="url(#g34)"/><path d="M735.7 464.4 L750.7 453.59999999999997 L750.7 479.5 L735.7 490.3 Z" fill="#0a8840"/><line x1="675.2" y1="464.4" x2="735.7" y2="464.4" stroke="#101018" stroke-width="1.3"/><line x1="735.7" y1="464.4" x2="750.7" y2="453.59999999999997" stroke="#101018" stroke-width="1.3"/><linearGradient id="g35" x1="0" y1="0" x2="0" y2="1"><stop offset="0" stop-color="#ff8fb6"/><stop offset="1" stop-color="#c24e70"/></linearGradient><rect x="675.2" y="439.2" width="60.5" height="25.20" fill="url(#g35)"/><path d="M735.7 439.2 L750.7 428.4 L750.7 453.59999999999997 L735.7 464.4 Z" fill="#b84868"/><line x1="675.2" y1="439.2" x2="735.7" y2="439.2" stroke="#101018" stroke-width="1.3"/><line x1="735.7" y1="439.2" x2="750.7" y2="428.4" stroke="#101018" stroke-width="1.3"/><linearGradient id="g36" x1="0" y1="0" x2="0" y2="1"><stop offset="0" stop-color="#12f2ff"/><stop offset="1" stop-color="#159ec6"/></linearGradient><rect x="675.2" y="413.3" width="60.5" height="25.90" fill="url(#g36)"/><path d="M735.7 413.3 L750.7 402.5 L750.7 428.4 L735.7 439.2 Z" fill="#1a8cbc"/><line x1="675.2" y1="413.3" x2="735.7" y2="413.3" stroke="#101018" stroke-width="1.3"/><line x1="735.7" y1="413.3" x2="750.7" y2="402.5" stroke="#101018" stroke-width="1.3"/><linearGradient id="g37" x1="0" y1="0" x2="0" y2="1"><stop offset="0" stop-color="#ff0a6c"/><stop offset="1" stop-color="#a8003e"/></linearGradient><rect x="675.2" y="398.5" width="60.5" height="14.80" fill="url(#g37)"/><path d="M735.7 398.5 L750.7 387.7 L750.7 402.5 L735.7 413.3 Z" fill="#8a0032"/><line x1="675.2" y1="398.5" x2="735.7" y2="398.5" stroke="#101018" stroke-width="1.3"/><line x1="735.7" y1="398.5" x2="750.7" y2="387.7" stroke="#101018" stroke-width="1.3"/><path d="M675.2 398.5 L690.2 387.7 L750.7 387.7 L735.7 398.5 Z" fill="#137c7a" stroke="#101018" stroke-width="1"/><path d="M675.2 680.5 L675.2 398.5 M735.7 680.5 L735.7 398.5 M750.7 387.7 L750.7 669.7 L735.7 680.5" fill="none" stroke="#101018" stroke-width="1"/><text x="705.45" y="698" text-anchor="middle" font-family="Liberation Sans" font-size="14" fill="#22227a" stroke="#22227a" stroke-width="0.3">1:44PM</text><rect x="679.95" y="700.6" width="51" height="1.3" fill="#22228a"/><linearGradient id="g38" x1="0" y1="0" x2="0" y2="1"><stop offset="0" stop-color="#12f7a2"/><stop offset="1" stop-color="#08845a"/></linearGradient><rect x="781.4" y="551.7" width="60.5" height="128.80" fill="url(#g38)"/><path d="M841.9 551.7 L856.9 540.9000000000001 L856.9 669.7 L841.9 680.5 Z" fill="#0e7c52"/><line x1="781.4" y1="551.7" x2="841.9" y2="551.7" stroke="#101018" stroke-width="1.3"/><line x1="841.9" y1="551.7" x2="856.9" y2="540.9000000000001" stroke="#101018" stroke-width="1.3"/><linearGradient id="g39" x1="0" y1="0" x2="0" y2="1"><stop offset="0" stop-color="#d612ff"/><stop offset="1" stop-color="#66008e"/></linearGradient><rect x="781.4" y="485.7" width="60.5" height="66.00" fill="url(#g39)"/><path d="M841.9 485.7 L856.9 474.9 L856.9 540.9000000000001 L841.9 551.7 Z" fill="#680c98"/><line x1="781.4" y1="485.7" x2="841.9" y2="485.7" stroke="#101018" stroke-width="1.3"/><line x1="841.9" y1="485.7" x2="856.9" y2="474.9" stroke="#101018" stroke-width="1.3"/><linearGradient id="g40" x1="0" y1="0" x2="0" y2="1"><stop offset="0" stop-color="#12fb66"/><stop offset="1" stop-color="#089a45"/></linearGradient><rect x="781.4" y="460.8" width="60.5" height="24.90" fill="url(#g40)"/><path d="M841.9 460.8 L856.9 450.0 L856.9 474.9 L841.9 485.7 Z" fill="#0a8840"/><line x1="781.4" y1="460.8" x2="841.9" y2="460.8" stroke="#101018" stroke-width="1.3"/><line x1="841.9" y1="460.8" x2="856.9" y2="450.0" stroke="#101018" stroke-width="1.3"/><linearGradient id="g41" x1="0" y1="0" x2="0" y2="1"><stop offset="0" stop-color="#ff8fb6"/><stop offset="1" stop-color="#c24e70"/></linearGradient><rect x="781.4" y="435" width="60.5" height="25.80" fill="url(#g41)"/><path d="M841.9 435 L856.9 424.2 L856.9 450.0 L841.9 460.8 Z" fill="#b84868"/><line x1="781.4" y1="435" x2="841.9" y2="435" stroke="#101018" stroke-width="1.3"/><line x1="841.9" y1="435" x2="856.9" y2="424.2" stroke="#101018" stroke-width="1.3"/><linearGradient id="g42" x1="0" y1="0" x2="0" y2="1"><stop offset="0" stop-color="#12f2ff"/><stop offset="1" stop-color="#159ec6"/></linearGradient><rect x="781.4" y="409" width="60.5" height="26.00" fill="url(#g42)"/><path d="M841.9 409 L856.9 398.2 L856.9 424.2 L841.9 435 Z" fill="#1a8cbc"/><line x1="781.4" y1="409" x2="841.9" y2="409" stroke="#101018" stroke-width="1.3"/><line x1="841.9" y1="409" x2="856.9" y2="398.2" stroke="#101018" stroke-width="1.3"/><linearGradient id="g43" x1="0" y1="0" x2="0" y2="1"><stop offset="0" stop-color="#ff0a6c"/><stop offset="1" stop-color="#a8003e"/></linearGradient><rect x="781.4" y="399.5" width="60.5" height="9.50" fill="url(#g43)"/><path d="M841.9 399.5 L856.9 388.7 L856.9 398.2 L841.9 409 Z" fill="#8a0032"/><line x1="781.4" y1="399.5" x2="841.9" y2="399.5" stroke="#101018" stroke-width="1.3"/><line x1="841.9" y1="399.5" x2="856.9" y2="388.7" stroke="#101018" stroke-width="1.3"/><linearGradient id="g44" x1="0" y1="0" x2="0" y2="1"><stop offset="0" stop-color="#a898bc"/><stop offset="1" stop-color="#9080a8"/></linearGradient><rect x="781.4" y="395.8" width="60.5" height="3.70" fill="url(#g44)"/><path d="M841.9 395.8 L856.9 385.0 L856.9 388.7 L841.9 399.5 Z" fill="#786890"/><line x1="781.4" y1="395.8" x2="841.9" y2="395.8" stroke="#101018" stroke-width="1.3"/><line x1="841.9" y1="395.8" x2="856.9" y2="385.0" stroke="#101018" stroke-width="1.3"/><linearGradient id="g45" x1="0" y1="0" x2="0" y2="1"><stop offset="0" stop-color="#f4f0c0"/><stop offset="1" stop-color="#e6e0a8"/></linearGradient><rect x="781.4" y="391.8" width="60.5" height="4.00" fill="url(#g45)"/><path d="M841.9 391.8 L856.9 381.0 L856.9 385.0 L841.9 395.8 Z" fill="#d0c890"/><line x1="781.4" y1="391.8" x2="841.9" y2="391.8" stroke="#101018" stroke-width="1.3"/><line x1="841.9" y1="391.8" x2="856.9" y2="381.0" stroke="#101018" stroke-width="1.3"/><linearGradient id="g46" x1="0" y1="0" x2="0" y2="1"><stop offset="0" stop-color="#128a88"/><stop offset="1" stop-color="#0e7070"/></linearGradient><rect x="781.4" y="390.7" width="60.5" height="1.10" fill="url(#g46)"/><path d="M841.9 390.7 L856.9 379.9 L856.9 381.0 L841.9 391.8 Z" fill="#0c6666"/><line x1="781.4" y1="390.7" x2="841.9" y2="390.7" stroke="#101018" stroke-width="1.3"/><line x1="841.9" y1="390.7" x2="856.9" y2="379.9" stroke="#101018" stroke-width="1.3"/><path d="M781.4 390.7 L796.4 379.9 L856.9 379.9 L841.9 390.7 Z" fill="#137c7a" stroke="#101018" stroke-width="1"/><path d="M781.4 680.5 L781.4 390.7 M841.9 680.5 L841.9 390.7 M856.9 379.9 L856.9 669.7 L841.9 680.5" fill="none" stroke="#101018" stroke-width="1"/><text x="811.65" y="698" text-anchor="middle" font-family="Liberation Sans" font-size="14" fill="#22227a" stroke="#22227a" stroke-width="0.3">1:45PM</text><rect x="786.15" y="700.6" width="51" height="1.3" fill="#22228a"/><linearGradient id="g47" x1="0" y1="0" x2="0" y2="1"><stop offset="0" stop-color="#12f7a2"/><stop offset="1" stop-color="#08845a"/></linearGradient><rect x="887.0" y="551.7" width="60.5" height="128.80" fill="url(#g47)"/><path d="M947.5 551.7 L962.5 540.9000000000001 L962.5 669.7 L947.5 680.5 Z" fill="#0e7c52"/><line x1="887.0" y1="551.7" x2="947.5" y2="551.7" stroke="#101018" stroke-width="1.3"/><line x1="947.5" y1="551.7" x2="962.5" y2="540.9000000000001" stroke="#101018" stroke-width="1.3"/><linearGradient id="g48" x1="0" y1="0" x2="0" y2="1"><stop offset="0" stop-color="#d612ff"/><stop offset="1" stop-color="#66008e"/></linearGradient><rect x="887.0" y="488.2" width="60.5" height="63.50" fill="url(#g48)"/><path d="M947.5 488.2 L962.5 477.4 L962.5 540.9000000000001 L947.5 551.7 Z" fill="#680c98"/><line x1="887.0" y1="488.2" x2="947.5" y2="488.2" stroke="#101018" stroke-width="1.3"/><line x1="947.5" y1="488.2" x2="962.5" y2="477.4" stroke="#101018" stroke-width="1.3"/><linearGradient id="g49" x1="0" y1="0" x2="0" y2="1"><stop offset="0" stop-color="#12fb66"/><stop offset="1" stop-color="#089a45"/></linearGradient><rect x="887.0" y="462.9" width="60.5" height="25.30" fill="url(#g49)"/><path d="M947.5 462.9 L962.5 452.09999999999997 L962.5 477.4 L947.5 488.2 Z" fill="#0a8840"/><line x1="887.0" y1="462.9" x2="947.5" y2="462.9" stroke="#101018" stroke-width="1.3"/><line x1="947.5" y1="462.9" x2="962.5" y2="452.09999999999997" stroke="#101018" stroke-width="1.3"/><linearGradient id="g50" x1="0" y1="0" x2="0" y2="1"><stop offset="0" stop-color="#ff8fb6"/><stop offset="1" stop-color="#c24e70"/></linearGradient><rect x="887.0" y="437.1" width="60.5" height="25.80" fill="url(#g50)"/><path d="M947.5 437.1 L962.5 426.3 L962.5 452.09999999999997 L947.5 462.9 Z" fill="#b84868"/><line x1="887.0" y1="437.1" x2="947.5" y2="437.1" stroke="#101018" stroke-width="1.3"/><line x1="947.5" y1="437.1" x2="962.5" y2="426.3" stroke="#101018" stroke-width="1.3"/><linearGradient id="g51" x1="0" y1="0" x2="0" y2="1"><stop offset="0" stop-color="#12f2ff"/><stop offset="1" stop-color="#159ec6"/></linearGradient><rect x="887.0" y="411.6" width="60.5" height="25.50" fill="url(#g51)"/><path d="M947.5 411.6 L962.5 400.8 L962.5 426.3 L947.5 437.1 Z" fill="#1a8cbc"/><line x1="887.0" y1="411.6" x2="947.5" y2="411.6" stroke="#101018" stroke-width="1.3"/><line x1="947.5" y1="411.6" x2="962.5" y2="400.8" stroke="#101018" stroke-width="1.3"/><linearGradient id="g52" x1="0" y1="0" x2="0" y2="1"><stop offset="0" stop-color="#ff0a6c"/><stop offset="1" stop-color="#a8003e"/></linearGradient><rect x="887.0" y="399" width="60.5" height="12.60" fill="url(#g52)"/><path d="M947.5 399 L962.5 388.2 L962.5 400.8 L947.5 411.6 Z" fill="#8a0032"/><line x1="887.0" y1="399" x2="947.5" y2="399" stroke="#101018" stroke-width="1.3"/><line x1="947.5" y1="399" x2="962.5" y2="388.2" stroke="#101018" stroke-width="1.3"/><linearGradient id="g53" x1="0" y1="0" x2="0" y2="1"><stop offset="0" stop-color="#5a2a8a"/><stop offset="1" stop-color="#40206a"/></linearGradient><rect x="887.0" y="395.75" width="60.5" height="3.25" fill="url(#g53)"/><path d="M947.5 395.75 L962.5 384.95 L962.5 388.2 L947.5 399 Z" fill="#381a60"/><line x1="887.0" y1="395.75" x2="947.5" y2="395.75" stroke="#101018" stroke-width="1.3"/><line x1="947.5" y1="395.75" x2="962.5" y2="384.95" stroke="#101018" stroke-width="1.3"/><path d="M887.0 395.75 L902.0 384.95 L962.5 384.95 L947.5 395.75 Z" fill="#2a7a50" stroke="#101018" stroke-width="1"/><path d="M887.0 680.5 L887.0 395.75 M947.5 680.5 L947.5 395.75 M962.5 384.95 L962.5 669.7 L947.5 680.5" fill="none" stroke="#101018" stroke-width="1"/><text x="917.25" y="698" text-anchor="middle" font-family="Liberation Sans" font-size="14" fill="#22227a" stroke="#22227a" stroke-width="0.3">1:46PM</text><rect x="891.75" y="700.6" width="51" height="1.3" fill="#22228a"/><linearGradient id="g54" x1="0" y1="0" x2="0" y2="1"><stop offset="0" stop-color="#12f7a2"/><stop offset="1" stop-color="#08845a"/></linearGradient><rect x="993.0" y="551.7" width="60.5" height="128.80" fill="url(#g54)"/><path d="M1053.5 551.7 L1068.5 540.9000000000001 L1068.5 669.7 L1053.5 680.5 Z" fill="#0e7c52"/><line x1="993.0" y1="551.7" x2="1053.5" y2="551.7" stroke="#101018" stroke-width="1.3"/><line x1="1053.5" y1="551.7" x2="1068.5" y2="540.9000000000001" stroke="#101018" stroke-width="1.3"/><linearGradient id="g55" x1="0" y1="0" x2="0" y2="1"><stop offset="0" stop-color="#d612ff"/><stop offset="1" stop-color="#66008e"/></linearGradient><rect x="993.0" y="486.5" width="60.5" height="65.20" fill="url(#g55)"/><path d="M1053.5 486.5 L1068.5 475.7 L1068.5 540.9000000000001 L1053.5 551.7 Z" fill="#680c98"/><line x1="993.0" y1="486.5" x2="1053.5" y2="486.5" stroke="#101018" stroke-width="1.3"/><line x1="1053.5" y1="486.5" x2="1068.5" y2="475.7" stroke="#101018" stroke-width="1.3"/><linearGradient id="g56" x1="0" y1="0" x2="0" y2="1"><stop offset="0" stop-color="#12fb66"/><stop offset="1" stop-color="#089a45"/></linearGradient><rect x="993.0" y="461.8" width="60.5" height="24.70" fill="url(#g56)"/><path d="M1053.5 461.8 L1068.5 451.0 L1068.5 475.7 L1053.5 486.5 Z" fill="#0a8840"/><line x1="993.0" y1="461.8" x2="1053.5" y2="461.8" stroke="#101018" stroke-width="1.3"/><line x1="1053.5" y1="461.8" x2="1068.5" y2="451.0" stroke="#101018" stroke-width="1.3"/><linearGradient id="g57" x1="0" y1="0" x2="0" y2="1"><stop offset="0" stop-color="#ff8fb6"/><stop offset="1" stop-color="#c24e70"/></linearGradient><rect x="993.0" y="435.9" width="60.5" height="25.90" fill="url(#g57)"/><path d="M1053.5 435.9 L1068.5 425.09999999999997 L1068.5 451.0 L1053.5 461.8 Z" fill="#b84868"/><line x1="993.0" y1="435.9" x2="1053.5" y2="435.9" stroke="#101018" stroke-width="1.3"/><line x1="1053.5" y1="435.9" x2="1068.5" y2="425.09999999999997" stroke="#101018" stroke-width="1.3"/><linearGradient id="g58" x1="0" y1="0" x2="0" y2="1"><stop offset="0" stop-color="#12f2ff"/><stop offset="1" stop-color="#159ec6"/></linearGradient><rect x="993.0" y="410.1" width="60.5" height="25.80" fill="url(#g58)"/><path d="M1053.5 410.1 L1068.5 399.3 L1068.5 425.09999999999997 L1053.5 435.9 Z" fill="#1a8cbc"/><line x1="993.0" y1="410.1" x2="1053.5" y2="410.1" stroke="#101018" stroke-width="1.3"/><line x1="1053.5" y1="410.1" x2="1068.5" y2="399.3" stroke="#101018" stroke-width="1.3"/><linearGradient id="g59" x1="0" y1="0" x2="0" y2="1"><stop offset="0" stop-color="#ff0a6c"/><stop offset="1" stop-color="#a8003e"/></linearGradient><rect x="993.0" y="399.6" width="60.5" height="10.50" fill="url(#g59)"/><path d="M1053.5 399.6 L1068.5 388.8 L1068.5 399.3 L1053.5 410.1 Z" fill="#8a0032"/><line x1="993.0" y1="399.6" x2="1053.5" y2="399.6" stroke="#101018" stroke-width="1.3"/><line x1="1053.5" y1="399.6" x2="1068.5" y2="388.8" stroke="#101018" stroke-width="1.3"/><linearGradient id="g60" x1="0" y1="0" x2="0" y2="1"><stop offset="0" stop-color="#58a870"/><stop offset="1" stop-color="#3a8850"/></linearGradient><rect x="993.0" y="395.5" width="60.5" height="4.10" fill="url(#g60)"/><path d="M1053.5 395.5 L1068.5 384.7 L1068.5 388.8 L1053.5 399.6 Z" fill="#307848"/><line x1="993.0" y1="395.5" x2="1053.5" y2="395.5" stroke="#101018" stroke-width="1.3"/><line x1="1053.5" y1="395.5" x2="1068.5" y2="384.7" stroke="#101018" stroke-width="1.3"/><linearGradient id="g61" x1="0" y1="0" x2="0" y2="1"><stop offset="0" stop-color="#128a88"/><stop offset="1" stop-color="#0e7070"/></linearGradient><rect x="993.0" y="392.2" width="60.5" height="3.30" fill="url(#g61)"/><path d="M1053.5 392.2 L1068.5 381.4 L1068.5 384.7 L1053.5 395.5 Z" fill="#0c6666"/><line x1="993.0" y1="392.2" x2="1053.5" y2="392.2" stroke="#101018" stroke-width="1.3"/><line x1="1053.5" y1="392.2" x2="1068.5" y2="381.4" stroke="#101018" stroke-width="1.3"/><path d="M993.0 392.2 L1008.0 381.4 L1068.5 381.4 L1053.5 392.2 Z" fill="#137c7a" stroke="#101018" stroke-width="1"/><path d="M993.0 680.5 L993.0 392.2 M1053.5 680.5 L1053.5 392.2 M1068.5 381.4 L1068.5 669.7 L1053.5 680.5" fill="none" stroke="#101018" stroke-width="1"/><text x="1023.25" y="698" text-anchor="middle" font-family="Liberation Sans" font-size="14" fill="#22227a" stroke="#22227a" stroke-width="0.3">1:47PM</text><rect x="997.75" y="700.6" width="51" height="1.3" fill="#22228a"/><linearGradient id="g62" x1="0" y1="0" x2="0" y2="1"><stop offset="0" stop-color="#12f7a2"/><stop offset="1" stop-color="#08845a"/></linearGradient><rect x="1099.3" y="551.7" width="60.5" height="128.80" fill="url(#g62)"/><path d="M1159.8 551.7 L1174.8 540.9000000000001 L1174.8 669.7 L1159.8 680.5 Z" fill="#0e7c52"/><line x1="1099.3" y1="551.7" x2="1159.8" y2="551.7" stroke="#101018" stroke-width="1.3"/><line x1="1159.8" y1="551.7" x2="1174.8" y2="540.9000000000001" stroke="#101018" stroke-width="1.3"/><linearGradient id="g63" x1="0" y1="0" x2="0" y2="1"><stop offset="0" stop-color="#d612ff"/><stop offset="1" stop-color="#66008e"/></linearGradient><rect x="1099.3" y="488.6" width="60.5" height="63.10" fill="url(#g63)"/><path d="M1159.8 488.6 L1174.8 477.8 L1174.8 540.9000000000001 L1159.8 551.7 Z" fill="#680c98"/><line x1="1099.3" y1="488.6" x2="1159.8" y2="488.6" stroke="#101018" stroke-width="1.3"/><line x1="1159.8" y1="488.6" x2="1174.8" y2="477.8" stroke="#101018" stroke-width="1.3"/><linearGradient id="g64" x1="0" y1="0" x2="0" y2="1"><stop offset="0" stop-color="#12fb66"/><stop offset="1" stop-color="#089a45"/></linearGradient><rect x="1099.3" y="462.9" width="60.5" height="25.70" fill="url(#g64)"/><path d="M1159.8 462.9 L1174.8 452.09999999999997 L1174.8 477.8 L1159.8 488.6 Z" fill="#0a8840"/><line x1="1099.3" y1="462.9" x2="1159.8" y2="462.9" stroke="#101018" stroke-width="1.3"/><line x1="1159.8" y1="462.9" x2="1174.8" y2="452.09999999999997" stroke="#101018" stroke-width="1.3"/><linearGradient id="g65" x1="0" y1="0" x2="0" y2="1"><stop offset="0" stop-color="#ff8fb6"/><stop offset="1" stop-color="#c24e70"/></linearGradient><rect x="1099.3" y="437.6" width="60.5" height="25.30" fill="url(#g65)"/><path d="M1159.8 437.6 L1174.8 426.8 L1174.8 452.09999999999997 L1159.8 462.9 Z" fill="#b84868"/><line x1="1099.3" y1="437.6" x2="1159.8" y2="437.6" stroke="#101018" stroke-width="1.3"/><line x1="1159.8" y1="437.6" x2="1174.8" y2="426.8" stroke="#101018" stroke-width="1.3"/><linearGradient id="g66" x1="0" y1="0" x2="0" y2="1"><stop offset="0" stop-color="#12f2ff"/><stop offset="1" stop-color="#159ec6"/></linearGradient><rect x="1099.3" y="411.6" width="60.5" height="26.00" fill="url(#g66)"/><path d="M1159.8 411.6 L1174.8 400.8 L1174.8 426.8 L1159.8 437.6 Z" fill="#1a8cbc"/><line x1="1099.3" y1="411.6" x2="1159.8" y2="411.6" stroke="#101018" stroke-width="1.3"/><line x1="1159.8" y1="411.6" x2="1174.8" y2="400.8" stroke="#101018" stroke-width="1.3"/><linearGradient id="g67" x1="0" y1="0" x2="0" y2="1"><stop offset="0" stop-color="#ff0a6c"/><stop offset="1" stop-color="#a8003e"/></linearGradient><rect x="1099.3" y="398" width="60.5" height="13.60" fill="url(#g67)"/><path d="M1159.8 398 L1174.8 387.2 L1174.8 400.8 L1159.8 411.6 Z" fill="#8a0032"/><line x1="1099.3" y1="398" x2="1159.8" y2="398" stroke="#101018" stroke-width="1.3"/><line x1="1159.8" y1="398" x2="1174.8" y2="387.2" stroke="#101018" stroke-width="1.3"/><path d="M1099.3 398 L1114.3 387.2 L1174.8 387.2 L1159.8 398 Z" fill="#137c7a" stroke="#101018" stroke-width="1"/><path d="M1099.3 680.5 L1099.3 398 M1159.8 680.5 L1159.8 398 M1174.8 387.2 L1174.8 669.7 L1159.8 680.5" fill="none" stroke="#101018" stroke-width="1"/><text x="1129.55" y="698" text-anchor="middle" font-family="Liberation Sans" font-size="14" fill="#22227a" stroke="#22227a" stroke-width="0.3">1:48PM</text><rect x="1104.05" y="700.6" width="51" height="1.3" fill="#22228a"/><linearGradient id="g68" x1="0" y1="0" x2="0" y2="1"><stop offset="0" stop-color="#12f7a2"/><stop offset="1" stop-color="#08845a"/></linearGradient><rect x="1204.2" y="551.7" width="60.5" height="128.80" fill="url(#g68)"/><path d="M1264.7 551.7 L1279.7 540.9000000000001 L1279.7 669.7 L1264.7 680.5 Z" fill="#0e7c52"/><line x1="1204.2" y1="551.7" x2="1264.7" y2="551.7" stroke="#101018" stroke-width="1.3"/><line x1="1264.7" y1="551.7" x2="1279.7" y2="540.9000000000001" stroke="#101018" stroke-width="1.3"/><linearGradient id="g69" x1="0" y1="0" x2="0" y2="1"><stop offset="0" stop-color="#d612ff"/><stop offset="1" stop-color="#66008e"/></linearGradient><rect x="1204.2" y="487.8" width="60.5" height="63.90" fill="url(#g69)"/><path d="M1264.7 487.8 L1279.7 477.0 L1279.7 540.9000000000001 L1264.7 551.7 Z" fill="#680c98"/><line x1="1204.2" y1="487.8" x2="1264.7" y2="487.8" stroke="#101018" stroke-width="1.3"/><line x1="1264.7" y1="487.8" x2="1279.7" y2="477.0" stroke="#101018" stroke-width="1.3"/><linearGradient id="g70" x1="0" y1="0" x2="0" y2="1"><stop offset="0" stop-color="#12fb66"/><stop offset="1" stop-color="#089a45"/></linearGradient><rect x="1204.2" y="462.9" width="60.5" height="24.90" fill="url(#g70)"/><path d="M1264.7 462.9 L1279.7 452.09999999999997 L1279.7 477.0 L1264.7 487.8 Z" fill="#0a8840"/><line x1="1204.2" y1="462.9" x2="1264.7" y2="462.9" stroke="#101018" stroke-width="1.3"/><line x1="1264.7" y1="462.9" x2="1279.7" y2="452.09999999999997" stroke="#101018" stroke-width="1.3"/><linearGradient id="g71" x1="0" y1="0" x2="0" y2="1"><stop offset="0" stop-color="#ff8fb6"/><stop offset="1" stop-color="#c24e70"/></linearGradient><rect x="1204.2" y="437.1" width="60.5" height="25.80" fill="url(#g71)"/><path d="M1264.7 437.1 L1279.7 426.3 L1279.7 452.09999999999997 L1264.7 462.9 Z" fill="#b84868"/><line x1="1204.2" y1="437.1" x2="1264.7" y2="437.1" stroke="#101018" stroke-width="1.3"/><line x1="1264.7" y1="437.1" x2="1279.7" y2="426.3" stroke="#101018" stroke-width="1.3"/><linearGradient id="g72" x1="0" y1="0" x2="0" y2="1"><stop offset="0" stop-color="#12f2ff"/><stop offset="1" stop-color="#159ec6"/></linearGradient><rect x="1204.2" y="411.6" width="60.5" height="25.50" fill="url(#g72)"/><path d="M1264.7 411.6 L1279.7 400.8 L1279.7 426.3 L1264.7 437.1 Z" fill="#1a8cbc"/><line x1="1204.2" y1="411.6" x2="1264.7" y2="411.6" stroke="#101018" stroke-width="1.3"/><line x1="1264.7" y1="411.6" x2="1279.7" y2="400.8" stroke="#101018" stroke-width="1.3"/><linearGradient id="g73" x1="0" y1="0" x2="0" y2="1"><stop offset="0" stop-color="#ff0a6c"/><stop offset="1" stop-color="#a8003e"/></linearGradient><rect x="1204.2" y="398" width="60.5" height="13.60" fill="url(#g73)"/><path d="M1264.7 398 L1279.7 387.2 L1279.7 400.8 L1264.7 411.6 Z" fill="#8a0032"/><line x1="1204.2" y1="398" x2="1264.7" y2="398" stroke="#101018" stroke-width="1.3"/><line x1="1264.7" y1="398" x2="1279.7" y2="387.2" stroke="#101018" stroke-width="1.3"/><path d="M1204.2 398 L1219.2 387.2 L1279.7 387.2 L1264.7 398 Z" fill="#137c7a" stroke="#101018" stroke-width="1"/><path d="M1204.2 680.5 L1204.2 398 M1264.7 680.5 L1264.7 398 M1279.7 387.2 L1279.7 669.7 L1264.7 680.5" fill="none" stroke="#101018" stroke-width="1"/><text x="1234.45" y="698" text-anchor="middle" font-family="Liberation Sans" font-size="14" fill="#22227a" stroke="#22227a" stroke-width="0.3">1:49PM</text><rect x="1208.95" y="700.6" width="51" height="1.3" fill="#22228a"/><rect x="1304.2" y="367.30" width="10" height="9.5" fill="#1aa866" stroke="#333" stroke-width="0.8"/><text x="1317.7" y="375.90" font-family="Liberation Sans" font-size="13.2" fill="#20205e" stroke="#20205e" stroke-width="0.35" textLength="73.6" lengthAdjust="spacingAndGlyphs">4263197484</text><rect x="1317.7" y="378.90" width="74.5" height="1.5" fill="#22225e"/><rect x="1304.2" y="388.09" width="10" height="9.5" fill="#8a08c0" stroke="#333" stroke-width="0.8"/><text x="1317.7" y="396.69" font-family="Liberation Sans" font-size="13.2" fill="#20205e" stroke="#20205e" stroke-width="0.35" textLength="73.6" lengthAdjust="spacingAndGlyphs">3543183732</text><rect x="1317.7" y="399.69" width="74.5" height="1.5" fill="#22225e"/><rect x="1304.2" y="408.88" width="10" height="9.5" fill="#12a858" stroke="#333" stroke-width="0.8"/><text x="1317.7" y="417.48" font-family="Liberation Sans" font-size="13.2" fill="#20205e" stroke="#20205e" stroke-width="0.35" textLength="73.6" lengthAdjust="spacingAndGlyphs">2947494563</text><rect x="1317.7" y="420.48" width="74.5" height="1.5" fill="#22225e"/><rect x="1304.2" y="429.67" width="10" height="9.5" fill="#ee6684" stroke="#333" stroke-width="0.8"/><text x="1317.7" y="438.27" font-family="Liberation Sans" font-size="13.2" fill="#20205e" stroke="#20205e" stroke-width="0.35" textLength="73.6" lengthAdjust="spacingAndGlyphs">2450700610</text><rect x="1317.7" y="441.27" width="74.5" height="1.5" fill="#22225e"/><rect x="1304.2" y="450.46" width="10" height="9.5" fill="#22c8ec" stroke="#333" stroke-width="0.8"/><text x="1317.7" y="459.06" font-family="Liberation Sans" font-size="13.2" fill="#20205e" stroke="#20205e" stroke-width="0.35" textLength="73.6" lengthAdjust="spacingAndGlyphs">4926510245</text><rect x="1317.7" y="462.06" width="74.5" height="1.5" fill="#22225e"/><rect x="1304.2" y="471.25" width="10" height="9.5" fill="#a8003a" stroke="#333" stroke-width="0.8"/><text x="1317.7" y="479.85" font-family="Liberation Sans" font-size="13.2" fill="#20205e" stroke="#20205e" stroke-width="0.35" textLength="73.6" lengthAdjust="spacingAndGlyphs">5320963417</text><rect x="1317.7" y="482.85" width="74.5" height="1.5" fill="#22225e"/><rect x="1304.2" y="492.04" width="10" height="9.5" fill="#149c68" stroke="#333" stroke-width="0.8"/><text x="1317.7" y="500.64" font-family="Liberation Sans" font-size="13.2" fill="#20205e" stroke="#20205e" stroke-width="0.35" textLength="73.6" lengthAdjust="spacingAndGlyphs">5940411480</text><rect x="1317.7" y="503.64" width="74.5" height="1.5" fill="#22225e"/><rect x="1304.2" y="512.83" width="10" height="9.5" fill="#3838b0" stroke="#333" stroke-width="0.8"/><text x="1317.7" y="521.43" font-family="Liberation Sans" font-size="13.2" fill="#20205e" stroke="#20205e" stroke-width="0.35" textLength="73.6" lengthAdjust="spacingAndGlyphs">5360238712</text><rect x="1317.7" y="524.43" width="74.5" height="1.5" fill="#22225e"/><rect x="1304.2" y="533.62" width="10" height="9.5" fill="#f0f070" stroke="#333" stroke-width="0.8"/><text x="1317.7" y="542.22" font-family="Liberation Sans" font-size="13.2" fill="#20205e" stroke="#20205e" stroke-width="0.35" textLength="73.6" lengthAdjust="spacingAndGlyphs">5901174855</text><rect x="1317.7" y="545.22" width="74.5" height="1.5" fill="#22225e"/><rect x="1304.2" y="554.41" width="10" height="9.5" fill="#b04498" stroke="#333" stroke-width="0.8"/><text x="1317.7" y="563.01" font-family="Liberation Sans" font-size="13.2" fill="#20205e" stroke="#20205e" stroke-width="0.35" textLength="73.6" lengthAdjust="spacingAndGlyphs">2889676349</text><rect x="1317.7" y="566.01" width="74.5" height="1.5" fill="#22225e"/><rect x="1304.2" y="575.20" width="10" height="9.5" fill="#40a8a8" stroke="#333" stroke-width="0.8"/><text x="1317.7" y="583.80" font-family="Liberation Sans" font-size="13.2" fill="#20205e" stroke="#20205e" stroke-width="0.35" textLength="73.6" lengthAdjust="spacingAndGlyphs">3216636204</text><rect x="1317.7" y="586.80" width="74.5" height="1.5" fill="#22225e"/><rect x="1304.2" y="595.99" width="10" height="9.5" fill="#30ee80" stroke="#333" stroke-width="0.8"/><text x="1317.7" y="604.59" font-family="Liberation Sans" font-size="13.2" fill="#20205e" stroke="#20205e" stroke-width="0.35" textLength="73.6" lengthAdjust="spacingAndGlyphs">6055306413</text><rect x="1317.7" y="607.59" width="74.5" height="1.5" fill="#22225e"/><rect x="1304.2" y="616.78" width="10" height="9.5" fill="#b05014" stroke="#333" stroke-width="0.8"/><text x="1317.7" y="625.38" font-family="Liberation Sans" font-size="13.2" fill="#20205e" stroke="#20205e" stroke-width="0.35" textLength="73.6" lengthAdjust="spacingAndGlyphs">3758213030</text><rect x="1317.7" y="628.38" width="74.5" height="1.5" fill="#22225e"/><rect x="1304.2" y="637.57" width="10" height="9.5" fill="#14a8a8" stroke="#333" stroke-width="0.8"/><text x="1317.7" y="646.17" font-family="Liberation Sans" font-size="13.2" fill="#20205e" stroke="#20205e" stroke-width="0.35" textLength="73.6" lengthAdjust="spacingAndGlyphs">2802518052</text><rect x="1317.7" y="649.17" width="74.5" height="1.5" fill="#22225e"/><rect x="1304.2" y="658.36" width="10" height="9.5" fill="#48a878" stroke="#333" stroke-width="0.8"/><text x="1317.7" y="666.96" font-family="Liberation Sans" font-size="13.2" fill="#20205e" stroke="#20205e" stroke-width="0.35" textLength="73.6" lengthAdjust="spacingAndGlyphs">5482628556</text><rect x="1317.7" y="669.96" width="74.5" height="1.5" fill="#22225e"/></svg><div style="position:absolute;left:77.8px;top:783.8px;width:1426px;height:1.6px;background:#333"></div><div style="position:absolute;left:82.1px;top:745.3px;width:115.7px;height:40px;background:#fff;border:1px solid #b8b8b8;border-bottom:none;border-radius:4px 4px 0 0;box-sizing:border-box"></div><div style="position:absolute;left:82.6px;top:783.5px;width:114.7px;height:2px;background:#fff"></div><div class="t" style="left:95.25px;top:754.13px;font-size:17.2px;font-weight:700;color:#222;">Resources</div>
<div style="position:absolute;left:202.5px;top:745.3px;width:101.3px;height:39px;background:#e9e9e9;border:1px solid #c6c6c6;border-bottom:none;border-radius:4px 4px 0 0;box-sizing:border-box"></div><div class="t" style="left:217.1px;top:753.50px;font-size:17.9px;font-weight:400;color:#333;">SQL Text</div>
<div style="position:absolute;left:1223.75px;top:795.6px;width:190px;height:34px;background:linear-gradient(#fdfdfd 0%,#f4f4f4 50%,#dedede 100%);border:1px solid #5a5a5a;box-sizing:border-box"></div><div class="t" style="left:1237px;top:802.18px;font-size:16.6px;font-weight:400;color:#222;">Add Resource Chart</div>
<div style="position:absolute;left:1391.7px;top:809.7px;width:0;height:0;border-top:5px solid #222;border-left:5px solid transparent;border-right:5px solid transparent"></div><div class="t" style="left:552px;top:834.91px;font-size:17px;font-weight:700;color:#111;letter-spacing:0.5px">Round-trip Time (ms)</div>
<div class="t" style="left:119.6px;top:855.34px;font-size:11px;font-weight:700;color:#222;">1</div>
<div style="position:absolute;left:128.5px;top:860px;width:3px;height:1px;background:#444"></div><div style="position:absolute;left:131px;top:860.3px;width:1065px;height:40px;background:linear-gradient(90deg,#f1eff5,#f7f5f8);border-top:1px solid #777;border-left:1.5px solid #666;border-right:1px solid #777;box-sizing:border-box"></div><svg style="position:absolute;left:1210px;top:855px" width="21" height="21">
<circle cx="10.3" cy="9.8" r="8.8" fill="#2b63c9" stroke="#dfe8f6" stroke-width="1"/>
<circle cx="11.3" cy="5.6" r="1.4" fill="#fff"/>
<path d="M9.2 8.2 L11.6 8 L10.4 13.2 Q10.3 14 11.4 13.4" fill="none" stroke="#fff" stroke-width="1.9"/>
</svg><div style="position:absolute;left:0;top:883px;width:1600px;height:17px;background:#dad7d3;border-top:1.5px solid #cfcfcf;box-sizing:border-box"></div><div style="position:absolute;left:0;top:885px;width:1600px;height:2px;background:#ecebea"></div><svg style="position:absolute;left:0;top:883px" width="1600" height="17">
<g fill="#cfccc8" stroke="#f4f4f4" stroke-width="0.8"><rect x="2" y="5" width="64" height="12"/><rect x="80" y="5" width="55" height="12"/><rect x="203" y="5" width="54" height="12"/><rect x="265" y="5" width="55" height="12"/><rect x="390" y="5" width="50" height="12"/><rect x="452" y="5" width="55" height="12"/><rect x="515" y="5" width="55" height="12"/><rect x="577" y="5" width="55" height="12"/></g>
<g fill="#333"><rect x="67" y="5" width="1.5" height="12"/><rect x="137" y="5" width="1.5" height="12"/><rect x="263" y="5" width="1.5" height="12"/><rect x="321" y="5" width="1.5" height="12"/><rect x="325" y="5" width="1.5" height="12"/><rect x="443" y="5" width="1.5" height="12"/><rect x="447" y="5" width="1.5" height="12"/><rect x="510" y="5" width="1.5" height="12"/><rect x="572" y="5" width="1.5" height="12"/><rect x="636" y="5" width="1.5" height="12"/></g>
<rect x="329" y="5" width="58" height="12" fill="#f5f5f5" stroke="#333" stroke-width="1.5"/>
<path d="M346 17 Q356 8 368 14" fill="none" stroke="#2a7ad0" stroke-width="3"/>
<path d="M354 12 Q362 9 372 12" fill="none" stroke="#e8b020" stroke-width="2"/>
<rect x="97" y="8" width="18" height="9" fill="#666"/>
<rect x="162" y="12" width="28" height="5" fill="#1a2a6a"/>
<rect x="215" y="10" width="30" height="7" fill="#d8b060"/>
<rect x="275" y="9" width="9" height="8" fill="#e8c030"/><rect x="288" y="9" width="14" height="2" fill="#335"/>
<rect x="468" y="10" width="30" height="7" fill="#eee" stroke="#666"/>
<rect x="528" y="8" width="30" height="9" fill="#ddd" stroke="#666"/>
<rect x="590" y="9" width="25" height="8" fill="#e0b840"/>
<rect x="1383" y="5.8" width="212.5" height="13" fill="#d9d6d2" stroke="#505050" stroke-width="1.5"/>
<text x="1511.5" y="22.3" font-family="Liberation Sans" font-size="12" font-weight="700" fill="#111">2:31 PM</text>
</svg><div style="position:absolute;left:0;top:0;width:1.5px;height:883px;background:rgba(128,128,128,0.6)"></div><svg style="position:absolute;left:130px;top:230px" width="40" height="42"><g transform="translate(-130 -230)">
<path d="M143.3 240 Q145.75 236.6 148.2 240 L148.2 245.6 Q150.6 243.3 153 245.6 L153 247.6 Q155.5 245.3 158 247.8 L158 249.6 Q160.3 247.5 161.7 250.6 L161.7 258.5 L158.9 262.8 L158.9 267.2 L145.2 267.2 L145.2 262.5 L137.8 254 Q137 251 140 251.2 L143.3 253.8 Z" fill="#f2f2f2" stroke="#111" stroke-width="1.4" stroke-linejoin="round"/>
<path d="M148.2 245.6 L148.2 253 M153 247.6 L153 253.5 M158 249.6 L158 254" fill="none" stroke="#222" stroke-width="1.1"/>
</g></svg>
</body></html>
